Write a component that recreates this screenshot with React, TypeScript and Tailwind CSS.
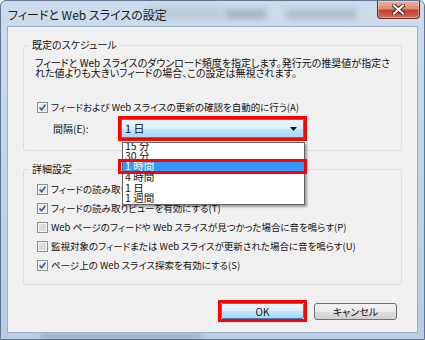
const jp = "font-['Noto_Sans_CJK_JP',sans-serif] [font-feature-settings:'palt']";

function Check({ on }: { on: boolean }) {
  return (
    <svg width="11" height="11" viewBox="0 0 11 11" className="shrink-0">
      <rect x="0.5" y="0.5" width="10" height="10" fill="#f4f4f4" stroke="#8e8f8f" />
      <rect x="2" y="2" width="7" height="7" fill={on ? "#e4e9ef" : "#dcdcdc"} />
      {on && <path d="M2.6 5.4 L4.6 7.8 L8.4 2.6" stroke="#35589c" strokeWidth="1.6" fill="none" />}
    </svg>
  );
}

function Row({ on, children }: { on: boolean; children: React.ReactNode }) {
  return (
    <div className="flex items-center gap-[3px] h-[19px] pl-[2px]">
      <Check on={on} />
      <span className="whitespace-nowrap text-[9.5px]">{children}</span>
    </div>
  );
}

const intervals = [
  { label: "15 分", h: "h-[10px] -mt-[2px]" },
  { label: "30 分", h: "h-[9px]" },
  { label: "1 時間", h: "h-[12px] bg-[#3399ff] text-white" },
  { label: "4 時間", h: "h-[10px]" },
  { label: "1 日", h: "h-[11px]" },
  { label: "1 週間", h: "h-[10px]" },
];

export default function App() {
  return (
    <div
      className={`${jp} w-[425px] h-[340px] flex flex-col relative overflow-hidden border border-[#5f7590] rounded-t-[6px] bg-[linear-gradient(180deg,#cddcec_0%,#c2d5ea_40%,#b8cde4_100%)] text-[10px] text-[#111]`}
    >
      <div className="absolute left-[150px] top-[6px] w-[70px] h-[12px] bg-[#8d97a3]/30 blur-[4px]" />
      <div className="absolute left-[225px] top-[8px] w-[40px] h-[10px] bg-[#5d6773]/35 blur-[3px]" />
      <div className="absolute left-[285px] top-[8px] w-[70px] h-[10px] bg-[#6a7480]/30 blur-[3px]" />
      <div className="absolute left-[40px] bottom-0 w-[160px] h-[6px] bg-[#6a7480]/30 blur-[2px]" />

      <div className="relative h-[25px] flex items-start justify-between pl-[7px] pr-[4px]">
        <span className="pt-[6px] text-[12px] leading-[16px] text-[#1b1b1b]">フィードと Web スライスの設定</span>
        <div className="w-[43px] h-[18px] rounded-b-[4px] border border-[#6b2b22] border-t-0 bg-[linear-gradient(180deg,#eab3a4_0%,#dd8a74_45%,#c4412b_55%,#d26a55_100%)] flex items-center justify-center shadow-[inset_0_0_0_1px_rgba(255,255,255,0.35)]">
          <svg width="13" height="11" viewBox="0 0 13 11">
            <path d="M2 1.5 L11 9.5 M11 1.5 L2 9.5" stroke="#4a1a14" strokeWidth="4" strokeLinecap="square" />
            <path d="M2 1.5 L11 9.5 M11 1.5 L2 9.5" stroke="#ffffff" strokeWidth="2.2" strokeLinecap="square" />
          </svg>
        </div>
      </div>

      <div className="relative flex-1 mx-[6px] mb-[6px] bg-[#f0f0f0] border border-[#9bb0c6] flex flex-col">
        <fieldset className="mt-[12px] mx-[15px] h-[112px] border border-[#d5dfe5] rounded-[3px] pl-[11px]">
          <legend className="ml-[-5px] px-[2px] leading-[12px]">既定のスケジュール</legend>
          <div className="pt-[7px] leading-[10px]">
            <div className="whitespace-nowrap">フィードと Web スライスのダウンロード頻度を指定します。発行元の推奨値が指定さ</div>
            <div className="whitespace-nowrap">れた値よりも大きいフィードの場合、この設定は無視されます。</div>
          </div>
          <div className="mt-[21px] h-[17px] flex items-center gap-[3px] pl-[2px]">
            <Check on />
            <span className="whitespace-nowrap text-[9.5px]">フィードおよび Web スライスの更新の確認を自動的に行う(A)</span>
          </div>
          <div className="flex items-center">
            <span className="w-[83px] pl-[18px]">間隔(E):</span>
            <div className="w-[189px] h-[25px] border-[3px] border-[#ff0000]">
              <div className="h-full border border-[#3c7fb1] bg-[linear-gradient(180deg,#eaf6fd_0%,#d9f0fc_50%,#bee6fd_51%,#a7d9f5_100%)] flex items-center justify-between pl-[3px] pr-[6px]">
                <span className="text-[11px]">1 日</span>
                <svg width="7" height="4" viewBox="0 0 7 4">
                  <path d="M0 0 H7 L3.5 4 Z" fill="#111" />
                </svg>
              </div>
            </div>
          </div>
        </fieldset>

        <fieldset className="mt-[12px] mx-[15px] h-[122px] border border-[#d5dfe5] rounded-[3px] pl-[11px]">
          <legend className="ml-[-5px] px-[2px] leading-[12px]">詳細設定</legend>
          <div className="pt-[5px]">
            <Row on>フィードの読み取り時にフィードを自動的に既読にする(M)</Row>
            <Row on>フィードの読み取りビューを有効にする(T)</Row>
            <Row on={false}>Web ページのフィードや Web スライスが見つかった場合に音を鳴らす(P)</Row>
            <Row on={false}>監視対象のフィードまたは Web スライスが更新された場合に音を鳴らす(U)</Row>
            <Row on>ページ上の Web スライス探索を有効にする(S)</Row>
          </div>
        </fieldset>

        <div className="mt-[15px] flex items-center justify-end gap-[7px] pr-[20px]">
          <div className="w-[89px] h-[22px] border-[3px] border-[#ff0000]">
            <div className="h-full rounded-[2px] border border-[#3c7fb1] bg-[linear-gradient(180deg,#eaf6fd_0%,#d9f0fc_50%,#bee6fd_51%,#a7d9f5_100%)] flex items-center justify-center text-[10px]">
              OK
            </div>
          </div>
          <div className="w-[83px] h-[17px] rounded-[3px] border border-[#707070] bg-[linear-gradient(180deg,#f2f2f2_0%,#ebebeb_50%,#dddddd_51%,#cfcfcf_100%)] flex items-center justify-center text-[10px]">
            キャンセル
          </div>
        </div>

        <div className="absolute left-[114px] top-[115px] w-[183px] h-[63px] bg-white border border-[#646464] shadow-[2px_2px_2px_rgba(0,0,0,0.35)] overflow-hidden flex flex-col text-[10.5px]">
          {intervals.map((it) => (
            <div key={it.label} className={`${it.h} shrink-0 pl-[2px] leading-[10px] flex items-center`}>
              {it.label}
            </div>
          ))}
        </div>
        <div className="absolute left-[110px] top-[132px] w-[189px] h-[15px] border-[3px] border-[#ff0000]" />
      </div>
    </div>
  );
}
